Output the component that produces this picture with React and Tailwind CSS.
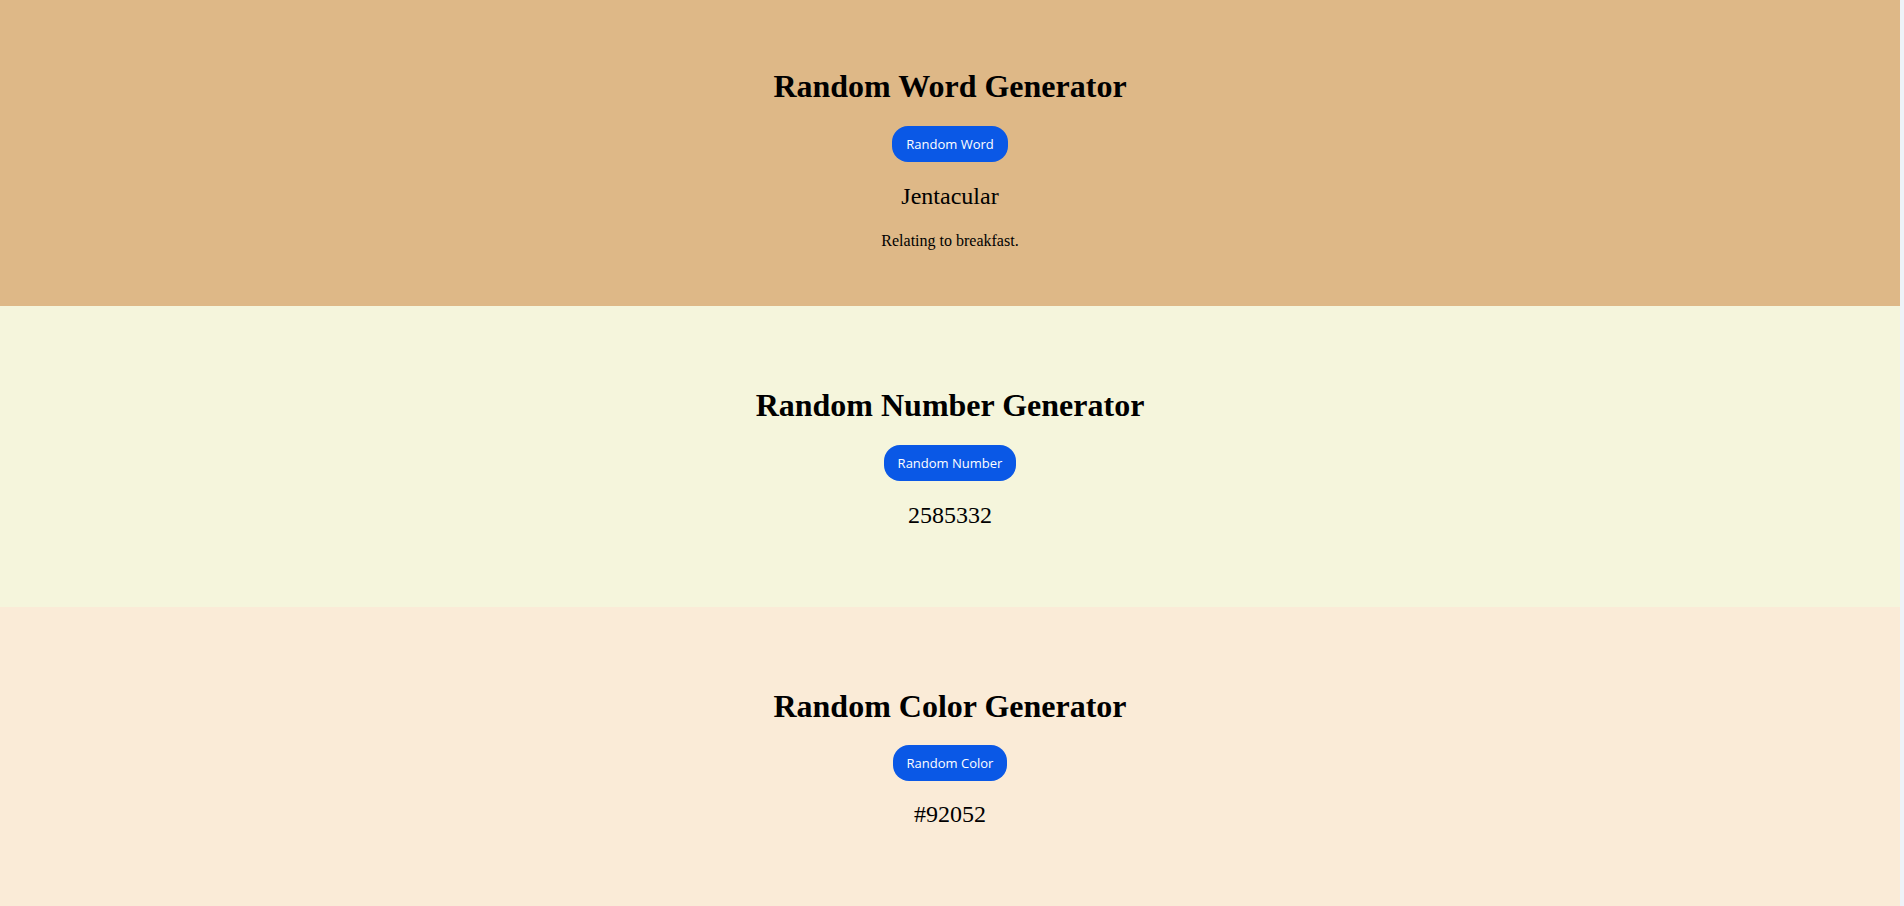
import React from "react";

function Btn({ children }) {
  return (
    <button
      className="h-[36px] px-[14px] rounded-[16px] bg-[#0a58e6] text-white text-[13px] leading-none"
      style={{ fontFamily: '"Open Sans", "Noto Sans", sans-serif' }}
    >
      {children}
    </button>
  );
}

const serif = { fontFamily: '"Liberation Serif", "Times New Roman", serif' };

export default function App() {
  return (
    <div className="w-full bg-[#eef2f8] text-black" style={serif}>
      <div className="w-[1900px]">
        <section className="h-[306px] bg-[#deb887] flex flex-col items-center pt-[68px]">
          <h1 className="text-[32px] font-bold leading-[36px]">Random Word Generator</h1>
          <div className="mt-[22px]">
            <Btn>Random Word</Btn>
          </div>
          <p className="mt-[21px] text-[24px] leading-[27px]">Jentacular</p>
          <p className="mt-[22px] text-[16px] leading-[18px]">Relating to breakfast.</p>
        </section>
        <section className="h-[301px] bg-[#f5f5dc] flex flex-col items-center pt-[81px]">
          <h1 className="text-[32px] font-bold leading-[36px]">Random Number Generator</h1>
          <div className="mt-[22px]">
            <Btn>Random Number</Btn>
          </div>
          <p className="mt-[21px] text-[24px] leading-[27px]">2585332</p>
        </section>
        <section className="h-[301px] bg-[#faebd7] flex flex-col items-center pt-[81px]">
          <h1 className="text-[32px] font-bold leading-[36px]">Random Color Generator</h1>
          <div className="mt-[21px]">
            <Btn>Random Color</Btn>
          </div>
          <p className="mt-[20px] text-[24px] leading-[27px]">#92052</p>
        </section>
      </div>
    </div>
  );
}
